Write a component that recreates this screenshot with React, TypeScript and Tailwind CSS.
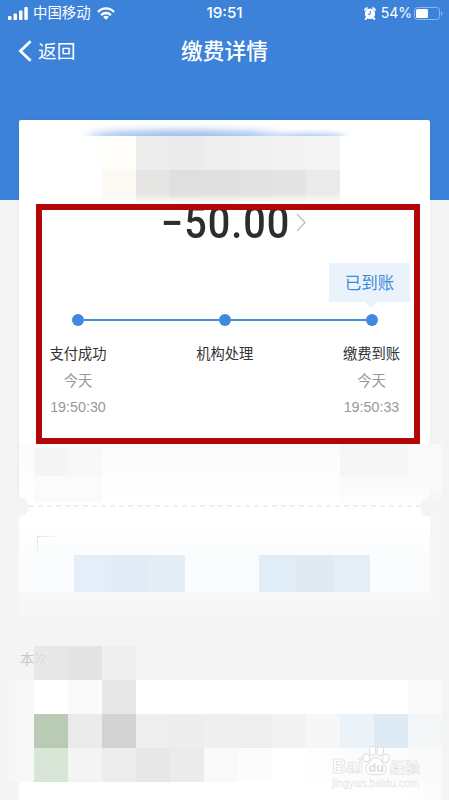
import React from "react";

const amountMosaic = [
  "bg-[#fffdfa]", "bg-[#ededed]", "bg-[#ebebeb]", "bg-[#eeeeee]", "bg-[#f0f0f0]", "bg-[#f2f2f2]", "bg-[#f4f4f4]",
  "bg-[#fdf9f3]", "bg-[#e5e5e4]", "bg-[#dfdfdf]", "bg-[#e0e0e0]", "bg-[#e2e2e2]", "bg-[#e4e4e4]", "bg-[#ebebeb]",
];

const listMosaic = [
  "bg-white", "bg-[#fafafa]", "bg-[#e7e7e7]", "bg-white", "bg-white", "bg-white",
  "bg-white", "bg-white", "bg-white", "bg-white", "bg-white", "bg-[#fafafa]",

  "bg-[#b9cbb4]", "bg-[#ebebeb]", "bg-[#d2d2d2]", "bg-[#eeeeee]", "bg-[#ededed]", "bg-[#efefef]",
  "bg-[#eeeeee]", "bg-[#f2f2f2]", "bg-[#f7f7f7]", "bg-[#ebf3f9]", "bg-[#deebf5]", "bg-[#f4f7f8]",

  "bg-[#d8e6d8]", "bg-[#f4f4f4]", "bg-[#ececec]", "bg-[#e7e7e7]", "bg-[#ebebeb]", "bg-[#f9f9f9]",
  "bg-[#fcfcfc]", "bg-white", "bg-[#fdfdfd]", "bg-[#fbfcfd]", "bg-[#fbfcfd]", "bg-[#fafafa]",
];

const steps = [
  { label: "支付成功", day: "今天", time: "19:50:30" },
  { label: "机构处理", day: "", time: "" },
  { label: "缴费到账", day: "今天", time: "19:50:33" },
];

const StatusBar = () => (
  <div className="grid h-[26px] grid-cols-[1fr_auto_1fr] items-center px-[7px] text-white">
    <div className="flex items-center">
      <svg className="ml-px" width="21" height="13" fill="currentColor">
        <rect x="0" y="9" width="3.5" height="4" rx="1" />
        <rect x="5.5" y="6.5" width="3.5" height="6.5" rx="1" />
        <rect x="11" y="3.5" width="3.5" height="9.5" rx="1" />
        <rect x="16.3" y="0" width="3.5" height="13" rx="1" />
      </svg>
      <span className="ml-[4px] text-[14.4px] leading-none">中国移动</span>
      <svg
        className="ml-[6px]"
        width="18"
        height="13"
        viewBox="0 0 18 13"
        fill="none"
        stroke="currentColor"
        strokeWidth="2.3"
      >
        <path d="M1 5C5.5.2 12.5.2 17 5" />
        <path d="M4.1 8.1c2.8-2.8 7-2.8 9.8 0" />
        <path d="M6.1 9.9c1.7-1.5 4.1-1.5 5.8 0L9 12.8z" fill="currentColor" stroke="none" />
      </svg>
    </div>

    <span className="font-[Inter] text-[15.2px] leading-none font-medium">
      19:51
    </span>

    <div className="-mr-px flex items-center justify-end">
      <svg width="12" height="13" viewBox="0 0 12 13">
        <circle cx="6" cy="6.8" r="5.2" fill="#fff" />
        <path
          d="M.9 2.9 2.9 1M11.1 2.9 9.1 1M2.8 10.8 1.6 12M9.2 10.8l1.2 1.2"
          stroke="#fff"
          strokeWidth="1.8"
          strokeLinecap="round"
        />
        <path d="M6.3 3.8v3.4H3.8" fill="none" stroke="#3c82d8" strokeWidth="1" />
      </svg>
      <span className="mr-[2px] ml-[5px] font-[Inter] text-[14px] leading-none">
        54%
      </span>
      <svg width="29" height="13" viewBox="0 0 29 13">
        <rect x=".5" y=".5" width="25" height="12" rx="3" fill="none" stroke="#8fb7e9" />
        <rect x="2" y="2" width="12" height="9" rx="1.5" fill="#fff" />
        <path d="M27 4.5c2 .6 2 3.4 0 4z" fill="#8fb7e9" />
      </svg>
    </div>
  </div>
);

const NavBar = () => (
  <nav className="grid h-[50px] grid-cols-[1fr_auto_1fr] items-center px-[18px] text-white">
    <div className="flex items-center gap-[6px]">
      <svg width="14" height="22" fill="none" stroke="currentColor" strokeWidth="2.8">
        <path d="M12.6 1.2 2.4 11l10.2 9.8" />
      </svg>
      <span className="pt-[2px] text-[18.7px] leading-none">返回</span>
    </div>
    <h1 className="pt-[2px] text-[21.7px] leading-none font-medium">缴费详情</h1>
  </nav>
);

const Progress = () => (
  <div className="px-[8px]">
    <div className="flex h-[39px] justify-end">
      <div className="relative mr-[-4px] flex h-[39px] w-[81px] items-center justify-center bg-[#eaf3fc] pt-px text-[16.5px] text-[#3f8ad9]">
        已到账
        <svg className="absolute top-full left-[36px]" width="12" height="6">
          <path d="M0 0h12L6 6z" fill="#eaf3fc" />
        </svg>
      </div>
    </div>

    <div className="mt-[12px] flex h-3 items-center pr-[28px] pl-[22px]">
      <i className="h-3 w-3 rounded-full bg-[#3f8ae0]" />
      <i className="h-[2px] flex-1 bg-[#4a8bd2]" />
      <i className="h-3 w-3 rounded-full bg-[#3f8ae0]" />
      <i className="h-[2px] flex-1 bg-[#4a8bd2]" />
      <i className="h-3 w-3 rounded-full bg-[#3f8ae0]" />
    </div>

    <ol className="mt-[15px] flex justify-between pr-[6px]">
      {steps.map((step) => (
        <li
          key={step.label}
          className="-ml-[0.5px] flex w-[57px] flex-col items-center text-[14.3px] leading-[26.5px] whitespace-nowrap text-[#999]"
        >
          <span className="text-[#333]">{step.label}</span>
          <span>{step.day}</span>
          <span>{step.time}</span>
        </li>
      ))}
    </ol>
  </div>
);

const Watermark = () => (
  <div className="absolute top-[745px] left-[332px] w-[89px] font-bold text-white [-webkit-text-stroke:0.6px_#d6d6d6]">
    <div className="flex h-[31px] items-end leading-none">
      <span className="w-[30px] text-[20px] leading-[20px]">Bai</span>
      <svg
        width="28"
        height="31"
        viewBox="0 0 28 31"
        fill="#fff"
        stroke="#d6d6d6"
        strokeWidth=".9"
      >
        <ellipse cx="4.3" cy="12.8" rx="3.2" ry="4.2" transform="rotate(-15 4.3 12.8)" />
        <ellipse cx="10.5" cy="5.8" rx="3.3" ry="4.5" />
        <ellipse cx="18.3" cy="6.2" rx="3.3" ry="4.5" transform="rotate(12 18.3 6.2)" />
        <ellipse cx="23.8" cy="13.5" rx="3.2" ry="4.2" transform="rotate(15 23.8 13.5)" />
        <path d="M14 12.6c4.3 0 5.4 4 8.2 6.7 2.8 2.8 2.8 8.8-2 10-3.2.7-9.2.7-12.4 0-4.8-1.2-4.8-7.2-2-10C8.6 16.6 9.7 12.6 14 12.6z" />
        <text
          className="[-webkit-text-stroke:0]"
          x="6.5"
          y="26.5"
          fontSize="12.5"
          fill="#dcdcdc"
          stroke="none"
        >
          du
        </text>
      </svg>
      <span className="text-[15px] leading-[17px] [-webkit-text-stroke:0.5px_#dadada]">
        经验
      </span>
    </div>
    <p className="mt-px text-[10.8px] leading-[13px] font-normal text-[#f0f0f0] [-webkit-text-stroke:0.3px_#e4e4e4]">
      jingyan.baidu.com
    </p>
  </div>
);

const App = () => {
  return (
    <main className="relative h-[800px] w-[449px] overflow-hidden bg-[linear-gradient(#3c82d8_200px,#f4f4f4_200px)] font-['Liberation_Sans','Noto_Sans_CJK_SC',sans-serif]">
      <StatusBar />
      <NavBar />

      <section className="mt-[44px] mr-[19px] ml-[19px] rounded-t-[2px] bg-white shadow-[0_0_5px_rgba(0,0,0,0.05)]">
        <div className="flex h-4 items-end overflow-hidden pl-[68px]">
          <div className="-mb-[6px] h-[11px] w-[195px] rounded-[50%] bg-[#8db3e8] blur-[4px]" />
          <div className="-mb-[6px] -ml-[10px] h-[8px] w-[75px] rounded-[50%] bg-[#9dbeec] blur-[3px]" />
        </div>
        <div className="ml-[83px] grid h-[68px] w-[238px] grid-cols-7 [mask-image:linear-gradient(#000_58px,transparent)]">
          {amountMosaic.map((color, i) => (
            <div key={i} className={color} />
          ))}
        </div>

        <div className="mr-[10px] ml-[17px] h-[240px] border-[6px] border-[#b30608]">
          <div className="flex h-[53px] items-start pl-[119px] [clip-path:inset(0)]">
            <span className="w-[128px] origin-left scale-x-[0.91] font-[Roboto] text-[43.5px] leading-[27px] font-medium tracking-[1.1px] whitespace-nowrap text-[#2d2d2d]">
              −50.00
            </span>
            <svg className="mt-[3px] ml-[7px]" width="10" height="19" fill="none" stroke="#bbb" strokeWidth="1.2">
              <path d="m1 1 8 8.5L1 18" />
            </svg>
          </div>
          <Progress />
        </div>

        <div className="flex h-[62px] justify-between bg-[linear-gradient(#fbfbfb,#fff)] pl-[15px]">
          <div className="mt-1 grid h-[54px] w-[68px] grid-cols-2 grid-rows-[28px_26px]">
            <div className="bg-[#f5f5f5]" />
            <div className="bg-[#f8f8f8]" />
            <div className="bg-[#fbfbfb]" />
            <div className="bg-[#fbfbfb]" />
          </div>
          <div className="-mr-3 grid h-[62px] w-[102px] grid-cols-[68px_34px] grid-rows-[32px_30px] [mask-image:linear-gradient(#000_44px,transparent)]">
            <div className="bg-[#f6f6f6]" />
            <div className="bg-[#f9f9f9]" />
            <div className="bg-[#fafafa]" />
            <div className="bg-[#fafafa]" />
          </div>
        </div>
      </section>

      <section className="mr-[7px] ml-[19px] flow-root h-[110px] bg-[linear-gradient(90deg,transparent_411px,#f6f6f6_411px),linear-gradient(#fff_20px,#fafcfd_50px,#fafcfd_86px,#f8f8f8_86px,#f6f6f6)]">
        <div className="-mt-[9px] mr-[2px] -ml-[10px] flex h-5 items-center">
          <i className="h-5 w-5 rounded-full bg-[#f4f4f4]" />
          <svg className="-mt-[3px] flex-1" height="2">
            <path d="M0 1h400" stroke="#ededed" strokeWidth="2" strokeDasharray="5 4" />
          </svg>
          <i className="h-5 w-5 rounded-full bg-[#f4f4f4]" />
        </div>
        <div className="mt-[19px] ml-[18px] h-[19px] w-[20px] border-t border-l border-[#d5e0e9] [mask-image:linear-gradient(135deg,#000,transparent_60%)]" />
        <div className="flex gap-[74px] pl-[55px]">
          <div className="grid h-[37px] w-[111px] grid-cols-3">
            <div className="bg-[#e3eef8]" />
            <div className="bg-[#e0ebf5]" />
            <div className="bg-[#e4ecf4]" />
          </div>
          <div className="grid h-[37px] w-[111px] grid-cols-3">
            <div className="bg-[#e0ecf6]" />
            <div className="bg-[#e0eaf3]" />
            <div className="bg-[#e6eef5]" />
          </div>
        </div>
      </section>

      <div className="mt-[30px] flex h-[34px] items-center pl-5">
        <span className="w-[14px] pb-[7px] text-[14px] whitespace-nowrap text-[#c8c8c8]">
          本
        </span>
        <div className="flex h-full w-[34px] items-center bg-[#e8e8e8] pb-[7px] text-[14px] text-[#dedede]">
          次
        </div>
        <div className="h-full w-[34px] bg-[#e4e4e4]" />
        <div className="h-full w-[34px] bg-[#efefef]" />
      </div>

      <section className="flex h-[102px] bg-[linear-gradient(90deg,#f4f4f4,#f8f8f8_20px,#f8f8f8_34px,#f4f4f4_34px)] pl-[34px]">
        <div className="grid h-[102px] w-[408px] grid-cols-12 bg-white">
          {listMosaic.map((color, i) => (
            <div key={i} className={color} />
          ))}
        </div>
      </section>
      <div className="ml-[19px] h-[18px] w-[423px] bg-[linear-gradient(90deg,#fff_390px,#fafafa)]" />

      <Watermark />
    </main>
  );
};

export default App;
